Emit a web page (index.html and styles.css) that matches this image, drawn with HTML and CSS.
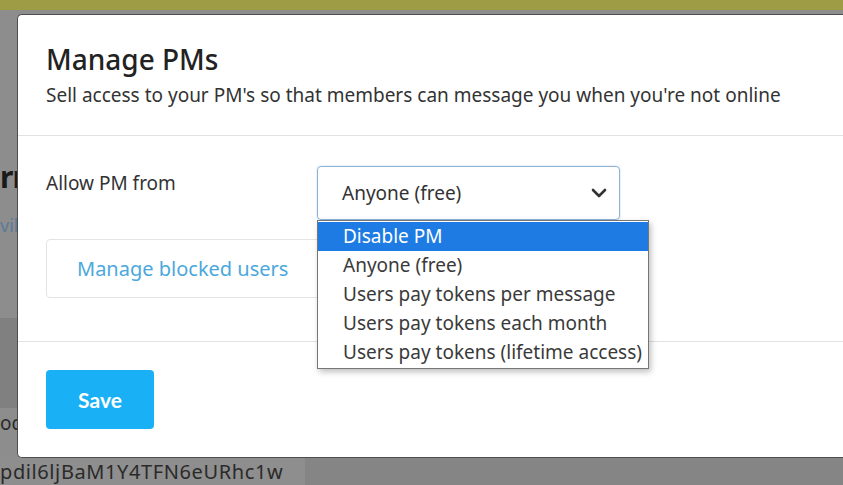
FILE: index.html
```html
<!DOCTYPE html>
<html>
<head>
<meta charset="utf-8">
<link rel="stylesheet" href="styles.css">
</head>
<body>
<div class="topband"></div>
<div class="page">
  <div class="bg-title">rr</div>
  <div class="bg-link">vik</div>
  <div class="bg-dark"></div>
  <div class="bg-row">oc</div>
  <div class="bg-token"><span>pdil6ljBaM1Y4TFN6eURhc1w</span></div>
</div>
<div class="modal">
  <div class="modal-head">
    <h1 class="title">Manage PMs</h1>
    <p class="subtitle">Sell access to your PM's so that members can message you when you're not online</p>
  </div>
  <div class="modal-body">
    <div class="field">
      <label class="field-label">Allow PM from</label>
      <div class="select-wrap">
        <div class="select">
          <span>Anyone (free)</span>
          <svg class="chev" width="16" height="10" viewBox="0 0 16 10"><path d="M2 2l6 6 6-6" fill="none" stroke="#333" stroke-width="2.6" stroke-linecap="round" stroke-linejoin="round"/></svg>
        </div>
        <ul class="options">
          <li class="opt active">Disable PM</li>
          <li class="opt">Anyone (free)</li>
          <li class="opt">Users pay tokens per message</li>
          <li class="opt">Users pay tokens each month</li>
          <li class="opt">Users pay tokens (lifetime access)</li>
        </ul>
      </div>
    </div>
    <div class="blocked">Manage blocked users</div>
  </div>
  <div class="modal-foot">
    <button class="save">Save</button>
  </div>
</div>
</body>
</html>
```
FILE: styles.css
```css
* { box-sizing: border-box; }
html, body { margin: 0; padding: 0; }
body {
  width: 843px;
  height: 485px;
  overflow: hidden;
  background: #8d8d8d;
  font-family: "Noto Sans", "Open Sans", sans-serif;
  position: relative;
}
.topband {
  height: 10px;
  background: #9e9d45;
}
.page {
  position: relative;
  height: 475px;
}
.bg-title {
  position: absolute;
  left: 0;
  top: 146px;
  font-size: 30px;
  font-weight: 700;
  color: #1a1a1a;
  letter-spacing: -1px;
}
.bg-link {
  position: absolute;
  left: 0;
  top: 203px;
  font-size: 18px;
  color: #5a7a9a;
}
.bg-dark {
  position: absolute;
  left: 0;
  top: 308px;
  width: 18px;
  height: 90px;
  background: #808080;
}
.bg-row {
  position: absolute;
  left: 0;
  top: 400px;
  font-size: 19px;
  color: #2a2a2a;
}
.bg-token {
  position: absolute;
  left: 0;
  top: 447px;
  width: 843px;
  height: 30px;
  background: #858585;
}
.bg-token span {
  display: block;
  width: 305px;
  height: 30px;
  background: #8e8e8e;
  font-size: 20px;
  color: #2a2a2a;
  line-height: 30px;
  letter-spacing: 0.6px;
}
.modal {
  position: absolute;
  left: 17px;
  top: 14px;
  width: 850px;
  height: 444px;
  background: #fff;
  border: 1px solid #4e4e4e;
  border-right: none;
  border-radius: 5px 0 0 5px;
  display: flex;
  flex-direction: column;
}
.modal-head {
  padding: 26px 28px 0 28px;
  height: 121px;
  border-bottom: 1px solid #e2e2e2;
}
.title {
  margin: 0;
  font-size: 28px;
  font-weight: 500;
  color: #222;
  line-height: 36px;
}
.subtitle {
  margin: 5px 0 0 0;
  font-size: 19px;
  color: #333;
  line-height: 26px;
  white-space: nowrap;
}
.modal-body {
  height: 207px;
  padding: 30px 28px 0 28px;
  border-bottom: 1px solid #e2e2e2;
}
.field {
  display: flex;
  align-items: flex-start;
}
.field-label {
  width: 271px;
  font-size: 19px;
  color: #333;
  padding-top: 4px;
}
.select-wrap {
  position: relative;
}
.select {
  width: 303px;
  height: 54px;
  border: 1px solid #8eb3d6;
  border-radius: 4px;
  display: flex;
  align-items: center;
  justify-content: space-between;
  padding: 0 12px 0 24px;
  font-size: 19px;
  color: #333;
  box-shadow: 0 0 2px rgba(80,140,200,0.4);
}
.options {
  position: absolute;
  left: 0;
  top: 54px;
  width: 332px;
  margin: 0;
  padding: 1px 0;
  list-style: none;
  background: #fff;
  border: 1px solid #767676;
  box-shadow: 2px 3px 6px rgba(0,0,0,0.25);
  z-index: 2;
}
.opt {
  height: 29px;
  line-height: 29px;
  padding-left: 25px;
  font-size: 19px;
  color: #3a3a3a;
  white-space: nowrap;
}
.opt.active {
  background: #1e7be3;
  color: #fff;
}
.blocked {
  margin-top: 19px;
  width: 290px;
  height: 59px;
  border: 1px solid #e4e4e4;
  border-radius: 4px;
  padding-left: 30px;
  display: flex;
  align-items: center;
  font-size: 20px;
  color: #4ba8dc;
  white-space: nowrap;
}
.modal-foot {
  padding: 28px 28px;
}
.save {
  width: 108px;
  height: 59px;
  border: none;
  border-radius: 4px;
  background: #1ab0f5;
  color: #fff;
  font-family: "Lato", sans-serif;
  font-weight: 700;
  font-size: 21px;
}
```
